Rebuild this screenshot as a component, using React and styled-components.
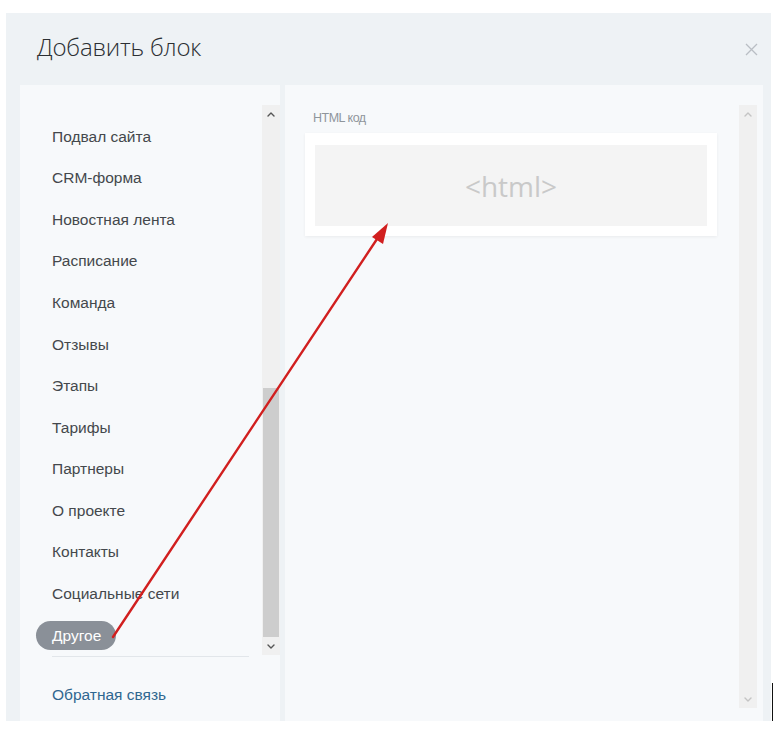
import React from "react";
import styled, { createGlobalStyle } from "styled-components";

const GlobalStyle = createGlobalStyle`
  html, body {
    margin: 0;
    padding: 0;
    background: #ffffff;
  }
  body {
    font-family: "Liberation Sans", Arial, sans-serif;
  }
`;

const blocks = [
  "Подвал сайта",
  "CRM-форма",
  "Новостная лента",
  "Расписание",
  "Команда",
  "Отзывы",
  "Этапы",
  "Тарифы",
  "Партнеры",
  "О проекте",
  "Контакты",
  "Социальные сети",
  "Другое",
];

const Chevron = ({ down, color }) => (
  <svg width="8" height="5" viewBox="0 0 8 5">
    <path
      d={down ? "M1 1 L4 4 L7 1" : "M1 4 L4 1 L7 4"}
      fill="none"
      stroke={color}
      strokeWidth="1.4"
      strokeLinecap="round"
      strokeLinejoin="round"
    />
  </svg>
);

const FakeScrollbar = ({ thumbTop, thumbHeight, arrowColor }) => (
  <ScrollTrack>
    <ScrollArrow>
      <Chevron color={arrowColor} />
    </ScrollArrow>
    <ThumbLane>
      {thumbHeight ? (
        <Thumb style={{ top: thumbTop, height: thumbHeight }} />
      ) : null}
    </ThumbLane>
    <ScrollArrow>
      <Chevron down color={arrowColor} />
    </ScrollArrow>
  </ScrollTrack>
);

export default function App() {
  return (
    <>
      <GlobalStyle />
      <Page>
        <Modal>
          <Header>
            <Title>Добавить блок</Title>
            <Close aria-label="close">
              <svg width="13" height="13" viewBox="0 0 13 13">
                <path
                  d="M1 1 L12 12 M12 1 L1 12"
                  stroke="#b9bec4"
                  strokeWidth="1.3"
                />
              </svg>
            </Close>
          </Header>
          <Body>
            <SidePanel>
              <ScrollArea>
                <BlockList>
                  {blocks.map((name) => (
                    <BlockItem key={name}>
                      {name === "Другое" ? <Pill>{name}</Pill> : name}
                    </BlockItem>
                  ))}
                </BlockList>
                <FakeScrollbar
                  thumbTop={265}
                  thumbHeight={249}
                  arrowColor="#555"
                />
              </ScrollArea>
              <Divider />
              <FeedbackLink>Обратная связь</FeedbackLink>
            </SidePanel>
            <MainPanel>
              <Content>
                <Label>HTML код</Label>
                <Card>
                  <Preview>&lt;html&gt;</Preview>
                </Card>
              </Content>
              <MainScroll>
                <FakeScrollbar arrowColor="#c4c4c4" />
              </MainScroll>
            </MainPanel>
          </Body>
          <ArrowOverlay width="775" height="736" viewBox="0 0 775 736">
            <line
              x1="113"
              y1="637"
              x2="379"
              y2="236"
              stroke="#d11f1f"
              strokeWidth="2.4"
              strokeLinecap="round"
            />
            <polygon points="388,223 372,237 383,244" fill="#d11f1f" />
          </ArrowOverlay>
        </Modal>
        <Caret />
      </Page>
    </>
  );
}

const Page = styled.div`
  position: relative;
  width: 775px;
  height: 736px;
  padding: 13px 0 0 6px;
  box-sizing: border-box;
`;

const Modal = styled.div`
  position: relative;
  width: 765px;
  height: 708px;
  background: #eef2f5;
  display: flex;
  flex-direction: column;
`;

const Header = styled.div`
  height: 72px;
  display: flex;
  align-items: center;
  justify-content: space-between;
  padding: 0 13px 0 31px;
  flex-shrink: 0;
`;

const Title = styled.h2`
  margin: 0;
  margin-top: -5px;
  font-family: "Open Sans", "Liberation Sans", sans-serif;
  font-weight: 300;
  font-size: 24px;
  color: #2b2f33;
  letter-spacing: -0.2px;
`;

const Close = styled.span`
  display: flex;
  margin-top: 1px;
`;

const Body = styled.div`
  flex: 1;
  display: flex;
  gap: 5px;
  padding: 0 8px 0 14px;
  min-height: 0;
`;

const SidePanel = styled.div`
  width: 261px;
  background: #f7f9fb;
  display: flex;
  flex-direction: column;
  padding-top: 20px;
  box-sizing: border-box;
`;

const ScrollArea = styled.div`
  height: 550px;
  display: flex;
  flex-shrink: 0;
`;

const BlockList = styled.ul`
  flex: 1;
  list-style: none;
  margin: 0;
  padding: 11px 0 0 32px;
  overflow: hidden;
`;

const BlockItem = styled.li`
  height: 41.55px;
  display: flex;
  align-items: center;
  font-size: 15.5px;
  color: #44484c;
`;

const Pill = styled.span`
  display: inline-flex;
  align-items: center;
  height: 29px;
  margin-left: -16px;
  padding: 0 15px 0 16px;
  border-radius: 15px;
  background: #8a9098;
  color: #ffffff;
  margin-top: 1px;
`;

const ScrollTrack = styled.div`
  width: 18px;
  height: 100%;
  background: #f0f0f0;
  display: flex;
  flex-direction: column;
`;

const ScrollArrow = styled.div`
  height: 18px;
  display: flex;
  align-items: center;
  justify-content: center;
  flex-shrink: 0;
`;

const ThumbLane = styled.div`
  position: relative;
  flex: 1;
`;

const Thumb = styled.div`
  position: absolute;
  left: 1px;
  right: 1px;
  background: #cdcdcd;
`;

const Divider = styled.div`
  height: 1px;
  margin: 1px 31px 0 32px;
  background: #e2e6ea;
`;

const FeedbackLink = styled.a`
  padding: 29px 0 0 32px;
  font-size: 15.5px;
  color: #2f6790;
  cursor: pointer;
`;

const MainPanel = styled.div`
  flex: 1;
  background: #f7f9fb;
  display: flex;
`;

const Content = styled.div`
  flex: 1;
  padding: 27px 22px 0 20px;
`;

const Label = styled.div`
  font-size: 12.5px;
  line-height: 13px;
  color: #8f959b;
  padding-left: 8px;
  letter-spacing: -0.5px;
`;

const Card = styled.div`
  margin-top: 8px;
  width: 412px;
  box-sizing: border-box;
  padding: 12px 10px 10px;
  background: #ffffff;
  box-shadow: 0 1px 3px rgba(0, 0, 0, 0.06);
`;

const Preview = styled.div`
  height: 81px;
  background: #f4f4f4;
  display: flex;
  align-items: center;
  justify-content: center;
  font-family: "Open Sans", "Liberation Sans", sans-serif;
  font-size: 28px;
  color: #c9c9c9;
`;

const MainScroll = styled.div`
  padding: 20px 6px 13px 0;
  display: flex;
`;

const ArrowOverlay = styled.svg`
  position: absolute;
  left: -6px;
  top: -13px;
  pointer-events: none;
`;

const Caret = styled.div`
  position: absolute;
  left: 772px;
  top: 683px;
  width: 1px;
  height: 38px;
  background: #111;
`;
